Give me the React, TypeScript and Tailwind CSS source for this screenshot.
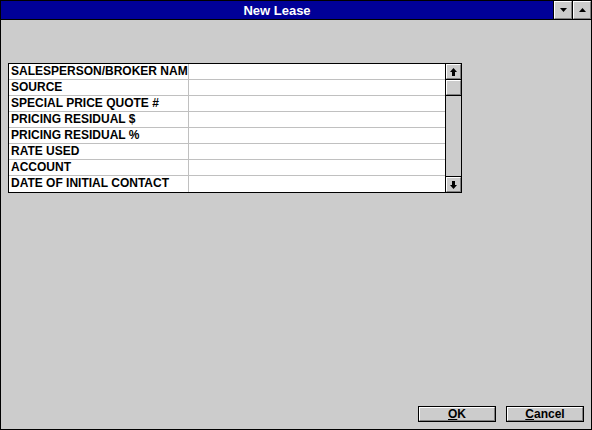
import React from "react";

const rows = [
  "SALESPERSON/BROKER NAM",
  "SOURCE",
  "SPECIAL PRICE QUOTE #",
  "PRICING RESIDUAL $",
  "PRICING RESIDUAL %",
  "RATE USED",
  "ACCOUNT",
  "DATE OF INITIAL CONTACT",
];

function Tri({ up }: { up?: boolean }) {
  return (
    <svg width="7" height="4" viewBox="0 0 7 4">
      {up ? <polygon points="0,4 7,4 3.5,0" fill="black" /> : <polygon points="0,0 7,0 3.5,4" fill="black" />}
    </svg>
  );
}

function Arrow({ up }: { up?: boolean }) {
  return (
    <svg width="7" height="8" viewBox="0 0 7 8">
      {up ? (
        <polygon points="3.5,0 7,4 5,4 5,8 2,8 2,4 0,4" fill="black" />
      ) : (
        <polygon points="3.5,8 7,4 5,4 5,0 2,0 2,4 0,4" fill="black" />
      )}
    </svg>
  );
}

const bevel = "border border-t-white border-l-white border-r-[#808080] border-b-[#808080]";

export default function App() {
  return (
    <div
      className="w-[592px] h-[430px] bg-[#cccccc] border border-black flex flex-col"
      style={{ fontFamily: '"Liberation Sans", Arial, sans-serif' }}
    >
      <div className="h-[19px] bg-[#000098] border-b border-black flex items-center relative shrink-0">
        <div className="flex-1 text-center text-white font-bold text-[13px] leading-none">New Lease</div>
        <div className="flex h-full">
          <div className="w-[19px] h-[18px] bg-[#cccccc] border-l border-black">
            <div className={`w-full h-full flex items-center justify-center ${bevel}`}>
              <Tri />
            </div>
          </div>
          <div className="w-[19px] h-[18px] bg-[#cccccc] border-l border-black">
            <div className={`w-full h-full flex items-center justify-center ${bevel}`}>
              <Tri up />
            </div>
          </div>
        </div>
      </div>

      <div className="flex-1 flex flex-col px-[7px] pt-[43px] pb-[6px]">
        <div className="w-[454px] border border-black bg-white flex">
          <div className="flex-1 flex flex-col">
            {rows.map((r, i) => (
              <div
                key={r}
                className={`h-[16px] flex ${i < rows.length - 1 ? "border-b border-[#c0c0c0]" : ""}`}
              >
                <div className="w-[180px] border-r border-[#c0c0c0] pl-[2px] text-[12px] font-bold leading-[15px] text-black whitespace-nowrap">
                  {r}
                </div>
                <div className="flex-1" />
              </div>
            ))}
          </div>
          <div className="w-[16px] border-l border-black bg-[#cccccc] flex flex-col">
            <div className={`h-[15px] flex items-center justify-center ${bevel}`}>
              <Arrow up />
            </div>
            <div className="h-px bg-black" />
            <div className={`h-[15px] ${bevel}`} />
            <div className="h-px bg-black" />
            <div className="flex-1" />
            <div className="h-px bg-black" />
            <div className={`h-[15px] flex items-center justify-center ${bevel}`}>
              <Arrow />
            </div>
          </div>
        </div>

        <div className="flex-1" />
        <div className="flex justify-end gap-[10px] pb-px">
          {[
            { t: "OK", u: "O", rest: "K" },
            { t: "Cancel", u: "C", rest: "ancel" },
          ].map((b) => (
            <div key={b.t} className="w-[78px] h-[16px] border border-black bg-[#cccccc]">
              <div className={`w-full h-full flex items-center justify-center text-[12px] font-bold leading-none text-black ${bevel}`}>
                <span className="underline underline-offset-1">{b.u}</span>
                <span>{b.rest}</span>
              </div>
            </div>
          ))}
        </div>
      </div>
    </div>
  );
}
